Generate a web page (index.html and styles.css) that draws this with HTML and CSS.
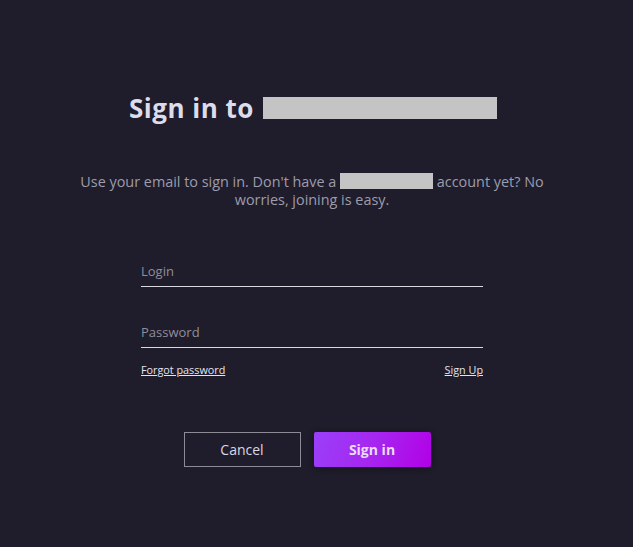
FILE: index.html
```html
<!DOCTYPE html>
<html>
<head>
<meta charset="utf-8">
<link rel="stylesheet" href="styles.css">
</head>
<body>
<main class="page">
  <h1 class="title">Sign in to <span class="redact redact-title"></span></h1>
  <p class="lead">Use your email to sign in. Don't have a <span class="redact redact-lead"></span> account yet? No worries, joining is easy.</p>
  <form class="form">
    <div class="field"><input class="input" type="text" placeholder="Login"></div>
    <div class="field"><input class="input" type="password" placeholder="Password"></div>
    <div class="links">
      <a href="#" class="link">Forgot password</a>
      <a href="#" class="link">Sign Up</a>
    </div>
    <div class="actions">
      <button type="button" class="btn btn-cancel">Cancel</button>
      <button type="button" class="btn btn-primary">Sign in</button>
    </div>
  </form>
</main>
</body>
</html>
```
FILE: styles.css
```css
html, body {
  margin: 0;
  padding: 0;
  background: #1f1c2b;
  height: 100%;
}
body {
  font-family: "Open Sans", "Liberation Sans", sans-serif;
  padding-right: 9px;
  box-sizing: border-box;
}
.page {
  display: flex;
  flex-direction: column;
  align-items: center;
  padding-top: 90px;
}
.title {
  margin: 0;
  font-family: "Open Sans", sans-serif;
  font-weight: 700;
  font-size: 26px;
  line-height: 36px;
  color: #dcdcec;
  display: flex;
  align-items: center;
  letter-spacing: 0.5px;
  padding-left: 2px;
}
.redact {
  display: inline-block;
  background: #c4c4c4;
}
.redact-title {
  width: 234px;
  height: 22px;
  margin-left: 9px;
}
.redact-lead {
  width: 93px;
  height: 16px;
  vertical-align: -2px;
}
.lead {
  margin: 47px 0 0;
  width: 480px;
  text-align: center;
  font-size: 14.4px;
  line-height: 18px;
  color: #9d9cab;
}
.form {
  width: 342px;
  margin-top: 42px;
  display: flex;
  flex-direction: column;
}
.field {
  border-bottom: 1px solid #d8d8e0;
  height: 36px;
  display: flex;
  align-items: flex-end;
  padding-bottom: 6px;
  box-sizing: border-box;
}
.field + .field {
  margin-top: 25px;
}
.input {
  background: transparent;
  border: 0;
  outline: none;
  width: 100%;
  padding: 0;
  font-family: "Open Sans", sans-serif;
  font-size: 13px;
  line-height: 18px;
  color: #ddd;
}
.input::placeholder {
  color: #8f8e9b;
}
.links {
  display: flex;
  justify-content: space-between;
  margin-top: 14px;
}
.link {
  font-size: 10.8px;
  color: #e4e4ee;
  text-decoration: underline;
  line-height: 15px;
}
.actions {
  display: flex;
  justify-content: center;
  gap: 13px;
  margin-top: 55px;
  padding-right: 10px;
}
.btn {
  width: 117px;
  height: 35px;
  font-family: "Open Sans", sans-serif;
  font-size: 14px;
  cursor: pointer;
  box-sizing: border-box;
}
.btn-cancel {
  background: transparent;
  border: 1px solid #8d8c96;
  color: #d8d8e6;
}
.btn-primary {
  border: 0;
  border-radius: 2px;
  background: linear-gradient(110deg, #9a40f8 0%, #a626f0 50%, #b200e6 100%);
  color: #e8dcf4;
  font-weight: 700;
  box-shadow: 0 1px 6px rgba(0,0,0,0.35);
}
```
